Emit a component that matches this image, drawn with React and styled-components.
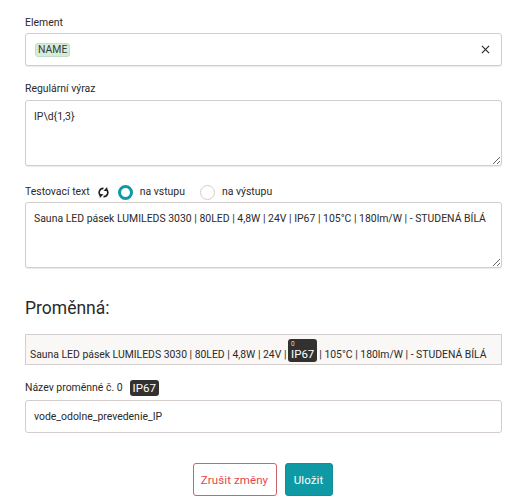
import React from "react";
import styled, { createGlobalStyle } from "styled-components";

const GlobalStyle = createGlobalStyle`
  html, body {
    margin: 0;
    background: #fff;
    font-family: Roboto, sans-serif;
    color: #2b2a29;
  }
`;

const Page = styled.div`
  width: 523px;
  height: 500px;
  box-sizing: border-box;
  padding: 14px 21px 0 25px;
  overflow: hidden;
`;

const Label = styled.div`
  display: flex;
  align-items: center;
  height: 18px;
  font-size: 10.45px;
  line-height: 18px;
  margin-bottom: ${(p) => p.$mb ?? 0}px;
`;

const Field = styled.div`
  box-sizing: border-box;
  width: 477px;
  height: ${(p) => p.$h}px;
  border: 1px solid #d3cecb;
  border-radius: 3px;
  background: #fff;
  box-shadow: 0 1px 1px rgba(0, 0, 0, 0.08);
  padding: 0 9px;
  font-size: 10.45px;
  margin-bottom: ${(p) => p.$mb ?? 0}px;
`;

const SelectField = styled(Field)`
  display: flex;
  align-items: center;
  justify-content: space-between;
  padding-right: 11px;
`;

const Chip = styled.span`
  box-sizing: border-box;
  background: #d5ecd9;
  border: 1px solid #bfe0c6;
  border-radius: 3px;
  padding: 0 2px;
  height: 14px;
  line-height: 12px;
  display: inline-block;
  color: #3a3a38;
`;

const Clear = styled.svg`
  width: 9px;
  height: 9px;
  stroke: #222;
  stroke-width: 1.2;
  display: block;
`;

const TextArea = styled.textarea`
  display: block;
  box-sizing: border-box;
  width: 477px;
  height: 66px;
  border: 1px solid #d3cecb;
  border-radius: 3px;
  box-shadow: 0 1px 1px rgba(0, 0, 0, 0.08);
  padding: 9px 8px;
  font-family: Roboto, sans-serif;
  font-size: 10.45px;
  line-height: 14px;
  color: #2b2a29;
  outline: none;
  resize: vertical;
  margin-bottom: ${(p) => p.$mb ?? 0}px;
`;

const TextInput = styled.input`
  display: block;
  box-sizing: border-box;
  width: 477px;
  height: 33px;
  border: 1px solid #d3cecb;
  border-radius: 3px;
  padding: 0 8px;
  font-family: Roboto, sans-serif;
  font-size: 10.45px;
  color: #2b2a29;
  outline: none;
`;

const RefreshIcon = styled.svg`
  width: 11px;
  height: 11px;
  margin: 0 9px 0 8px;
  flex-shrink: 0;
  fill: #222;
  stroke: #222;
`;

const Radio = styled.span`
  box-sizing: border-box;
  width: 15px;
  height: 15px;
  border-radius: 50%;
  border: ${(p) => (p.$on ? "3.5px solid #0f99a5" : "1px solid #d3cecb")};
  background: #fff;
  margin-right: 7px;
`;

const RadioText = styled.span`
  margin-right: ${(p) => p.$mr ?? 0}px;
`;

const Heading = styled.h2`
  margin: 0 0 13px;
  font-size: 17.5px;
  font-weight: 400;
  line-height: 26px;
`;

const Preview = styled.div`
  box-sizing: border-box;
  width: 477px;
  height: 31px;
  border: 1px solid #d3cecb;
  background: #faf8f7;
  padding: 0 0 2px 4px;
  font-size: 10.4px;
  display: flex;
  align-items: flex-end;
  white-space: pre;
  line-height: 15px;
  margin-bottom: 14px;
`;

const Match = styled.span`
  position: relative;
  display: inline-block;
  background: #333130;
  color: #fff;
  border-radius: 3px;
  padding: 8px 3px 1px;
  margin: 0 2px 0 -1px;
  height: 14px;
  line-height: 14px;
  font-size: 11.5px;
`;

const MatchIndex = styled.span`
  position: absolute;
  top: 1px;
  left: 3px;
  font-size: 6.5px;
  line-height: 9px;
  color: #ddd;
`;

const Tag = styled.span`
  background: #333130;
  color: #fff;
  border-radius: 3px;
  padding: 0 3px;
  margin-left: 7px;
  height: 16px;
  line-height: 16px;
  font-size: 11.5px;
`;

const Actions = styled.div`
  display: flex;
  justify-content: center;
  gap: 8px;
  width: 475px;
  margin-top: 30px;
`;

const Button = styled.button`
  box-sizing: border-box;
  height: 33px;
  width: ${(p) => (p.$primary ? 48 : 84)}px;
  padding: 0;
  border-radius: 3px;
  font-family: Roboto, sans-serif;
  font-size: 11.5px;
  letter-spacing: 0.1px;
  border: 1px solid ${(p) => (p.$primary ? "#0e8f9a" : "#c9666b")};
  background: ${(p) => (p.$primary ? "#0f99a5" : "#fff")};
  color: ${(p) => (p.$primary ? "#fff" : "#e8434b")};
`;

const sample = "Sauna LED pásek LUMILEDS 3030 | 80LED | 4,8W | 24V | IP67 | 105°C | 180lm/W | - STUDENÁ BÍLÁ";

export default function App() {
  return (
    <>
      <GlobalStyle />
      <Page>
        <Label $mb={1}>Element</Label>
        <SelectField $h={33} $mb={14}>
          <Chip>NAME</Chip>
          <Clear viewBox="0 0 10 10">
            <path d="M1 1l8 8M9 1l-8 8" />
          </Clear>
        </SelectField>

        <Label $mb={2}>Regulární výraz</Label>
        <TextArea $mb={17} defaultValue={"IP\\d{1,3}"} />

        <Label $mb={1}>
          Testovací text
          <RefreshIcon viewBox="0 0 24 24">
            <path d="M12 3A9 9 0 0 0 6 19M12 21A9 9 0 0 0 18 5" fill="none" strokeWidth="3.6" />
            <path d="M20 0l1 9-9-1zM4 24l-1-9 9 1z" stroke="none" />
          </RefreshIcon>
          <Radio $on />
          <RadioText $mr={15}>na vstupu</RadioText>
          <Radio />
          <RadioText>na výstupu</RadioText>
        </Label>
        <TextArea $mb={27} defaultValue={sample} />

        <Heading>Proměnná:</Heading>

        <Preview>
          Sauna LED pásek LUMILEDS 3030 | 80LED | 4,8W | 24V |{" "}
          <Match>
            <MatchIndex>0</MatchIndex>IP67
          </Match>{" "}
          | 105°C | 180lm/W | - STUDENÁ BÍLÁ
        </Preview>

        <Label $mb={3}>
          Název proměnné č. 0<Tag>IP67</Tag>
        </Label>
        <TextInput defaultValue="vode_odolne_prevedenie_IP" />

        <Actions>
          <Button>Zrušit změny</Button>
          <Button $primary>Uložit</Button>
        </Actions>
      </Page>
    </>
  );
}
